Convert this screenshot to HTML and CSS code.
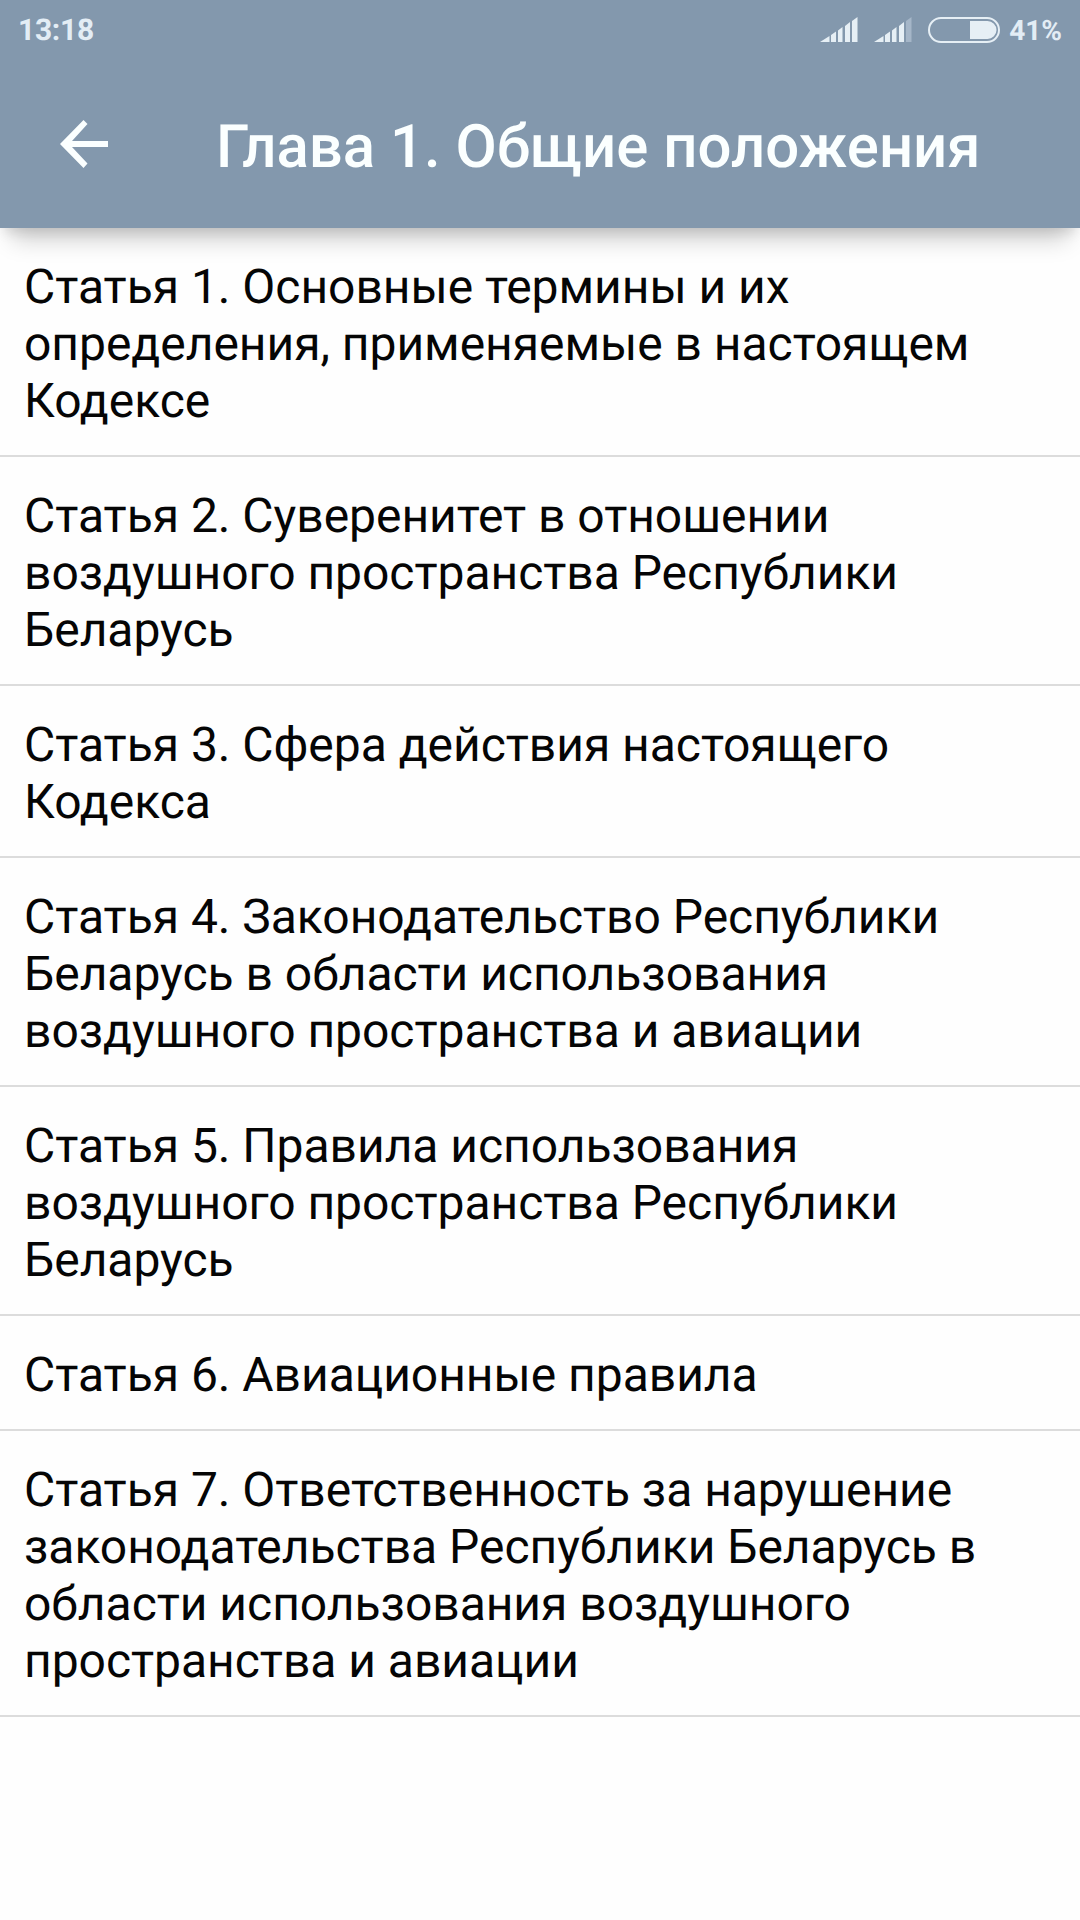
FILE: index.html
```html
<!DOCTYPE html>
<html lang="ru">
<head>
  <meta charset="UTF-8" />
  <meta name="viewport" content="width=device-width, initial-scale=1.0"/>
  <title>Глава 1. Общие положения</title>
  <link rel="stylesheet" href="styles.css">
</head>
<body>

  <header class="header">
    <div class="status">
      <span class="time">13:18</span>
      <div class="status-icons">
        <svg class="signal" width="38" height="26" viewBox="0 0 38 26">
          <path d="M0 25L9.5 19V25zM11 18L16 14.5V25H11zM18 13.500L22.500 10V25H18zM25 9L30 5V25H25zM32 4L37.500 0V25H32z"/>
        </svg>
        <svg class="signal" width="38" height="26" viewBox="0 0 38 26">
          <path d="M0 25L9.5 19V25zM11 18L16 14.5V25H11zM18 13.500L22.500 10V25H18zM25 9L30 5V25H25z"/>
          <path class="signal-off" d="M32 4L37.500 0V25H32z"/>
        </svg>
        <svg class="battery" width="72" height="26" viewBox="0 0 72 26">
          <rect class="battery-frame" x="1" y="1" width="70" height="24" rx="12"/>
          <path d="M42 4H59.500A9 9 0 0 1 59.500 22H42z"/>
        </svg>
        <span class="percent">41%</span>
      </div>
    </div>
    <div class="toolbar">
      <a class="back" href="#" aria-label="Назад">
        <svg width="48" height="50" viewBox="0 0 48 50">
          <path d="M48 22V28H12L27.500 44.500L23.500 49L0 25L23.500 1L27.500 5L12 22z"/>
        </svg>
      </a>
      <h1>Глава 1. Общие положения</h1>
    </div>
  </header>

  <ul class="list">
    <li>Статья 1. Основные термины и их определения, применяемые в настоящем Кодексе</li>
    <li>Статья 2. Суверенитет в отношении воздушного пространства Республики Беларусь</li>
    <li>Статья 3. Сфера действия настоящего Кодекса</li>
    <li>Статья 4. Законодательство Республики Беларусь в области использования воздушного пространства и авиации</li>
    <li>Статья 5. Правила использования воздушного пространства Республики Беларусь</li>
    <li>Статья 6. Авиационные правила</li>
    <li>Статья 7. Ответственность за нарушение законодательства Республики Беларусь в области использования воздушного пространства и авиации</li>
  </ul>

</body>
</html>
```
FILE: styles.css
```css
* {
  box-sizing: border-box;
}

body {
  margin: 0;
  min-height: 1920px;
  font-family: Roboto, sans-serif;
  text-rendering: geometricPrecision;
  background: #fefefe;
  color: #050505;
}

.header {
  height: 228px;
  background-color: #8398ad;
  color: #fbffff;
  box-shadow: 0 24px 22px -12px rgba(0,0,0,0.18), 0 8px 12px -4px rgba(0,0,0,0.12);
}

.status {
  display: flex;
  justify-content: space-between;
  align-items: center;
  height: 60px;
  padding: 0 18px;
  color: #e3edf5;
  font-size: 30px;
  font-weight: 700;
}

.time {
  letter-spacing: -0.3px;
}

.status-icons {
  display: flex;
  align-items: center;
}

.signal {
  margin-right: 16px;
  fill: #e6eff5;
}

.signal-off {
  fill: #a5b6c8;
}

.battery {
  margin-right: 9px;
  fill: #e6eff5;
}

.battery-frame {
  fill: none;
  stroke: #e6eff5;
  stroke-width: 2;
}

.percent {
  font-size: 28px;
}

.toolbar {
  display: flex;
  align-items: center;
  height: 168px;
  padding: 0 60px;
}

.back svg {
  display: block;
  fill: #fbffff;
}

h1 {
  margin: 0 0 0 108px;
  padding-top: 5px;
  font-size: 59.9px;
  font-weight: 500;
  line-height: 70px;
  white-space: nowrap;
}

.list {
  margin: 0;
  padding: 0;
  list-style: none;
}

.list li {
  padding: 30px 24px 26px;
  border-bottom: 2px solid #dcdcdc;
  font-size: 48px;
  line-height: 57px;
  letter-spacing: -0.03px;
}
```
